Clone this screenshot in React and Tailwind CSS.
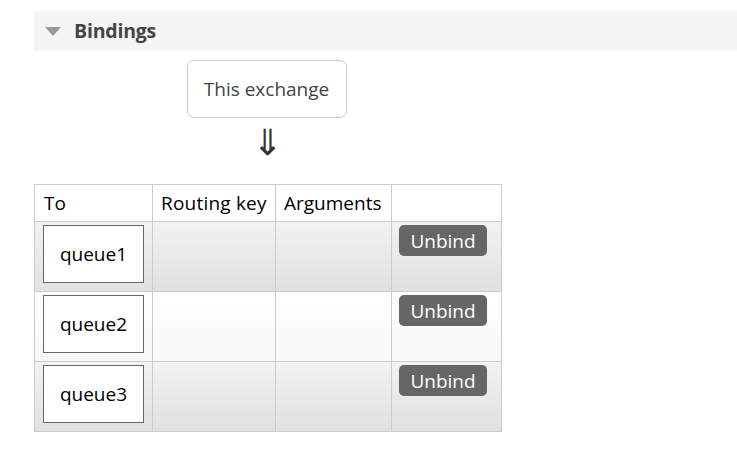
export default function App() {
  const rows = [
    { q: "queue1", bg: "bg-gradient-to-b from-[#f2f2f2] to-[#e0e0e0]" },
    { q: "queue2", bg: "bg-gradient-to-b from-[#ffffff] to-[#f8f8f8]" },
    { q: "queue3", bg: "bg-gradient-to-b from-[#f2f2f2] to-[#e0e0e0]" },
  ];
  return (
    <div className="w-[737px] h-[454px] bg-white overflow-hidden" style={{ fontFamily: '"Open Sans", "Noto Sans", sans-serif' }}>
      <div className="pt-[11px] pl-[34px]">
        <div className="h-[40px] bg-[#f5f5f5] flex items-center">
          <svg width="16" height="9" viewBox="0 0 16 9" className="ml-[11px] mt-[1px]">
            <polygon points="0,0 16,0 8,9" fill="#999" />
          </svg>
          <span className="ml-[13px] text-[19.5px] font-bold text-[#444] tracking-[-0.2px]">Bindings</span>
        </div>
        <div className="flex flex-col items-center w-[467px]">
          <div className="mt-[9px] w-[160px] h-[58px] border border-[#ccc] rounded-[7px] flex items-center justify-center text-[19px] text-[#444] relative left-[-1px]">
            This exchange
          </div>
          <div className="h-[66px] flex items-start pt-[6px] text-[36px] leading-[38px] text-[#333]" style={{ fontFamily: '"DejaVu Sans", sans-serif' }}>⇓</div>
        </div>
        <table className="border-collapse text-[19px] text-black">
          <thead>
            <tr className="h-[37px]">
              <th className="border border-[#ccc] font-normal text-left px-[9px] w-[118px] align-middle">To</th>
              <th className="border border-[#ccc] font-normal text-left px-[8px] w-[123px] align-middle tracking-[0.2px]">Routing key</th>
              <th className="border border-[#ccc] font-normal text-left px-[8px] w-[116px] align-middle">Arguments</th>
              <th className="border border-[#ccc] w-[110px]"></th>
            </tr>
          </thead>
          <tbody>
            {rows.map((r) => (
              <tr key={r.q} className={"h-[70px] " + r.bg}>
                <td className="border border-[#ccc] align-top pt-[3px] pl-[8px]">
                  <div className="w-[101px] h-[58px] border border-[#666] bg-white flex items-center justify-center text-[19px]">
                    {r.q}
                  </div>
                </td>
                <td className="border border-[#ccc]"></td>
                <td className="border border-[#ccc]"></td>
                <td className="border border-[#ccc] align-top pt-[3px] pl-[7px]">
                  <button className="w-[88px] h-[31px] bg-[#666] text-white rounded-[5px] text-[19px] leading-none flex items-center justify-center pt-[1px]">
                    Unbind
                  </button>
                </td>
              </tr>
            ))}
          </tbody>
        </table>
      </div>
    </div>
  );
}
